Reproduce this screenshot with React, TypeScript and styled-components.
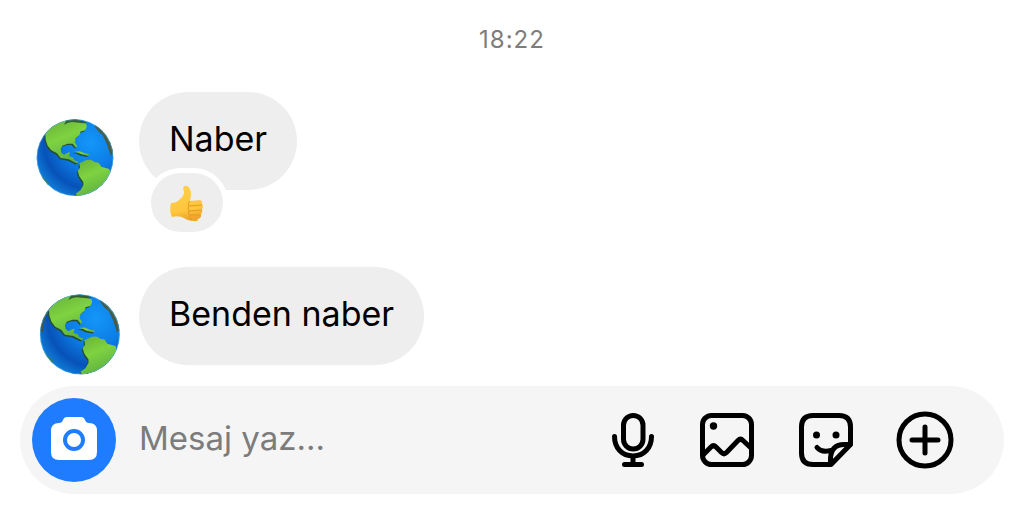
import React from "react";
import styled, { createGlobalStyle } from "styled-components";

const GlobalStyle = createGlobalStyle`
  *, *::before, *::after { box-sizing: border-box; }
  body {
    margin: 0;
    background: #fff;
    color: #000;
    font-family: Inter, "Liberation Sans", sans-serif;
  }
`;

const Chat = styled.main`
  padding: 20px;
`;

const Timestamp = styled.time`
  display: block;
  text-align: center;
  color: #7d7d7d;
  font-size: 24px;
  line-height: 40px;
  letter-spacing: 1px;
`;

const Thread = styled.ul`
  list-style: none;
  margin: 32px 0 9px;
  padding: 0 16px;
  display: flex;
  flex-direction: column;
  gap: 35px;
`;

const Message = styled.li`
  display: flex;
  align-items: flex-start;
  gap: 19px;
`;

const Avatar = styled.svg`
  flex: none;
  width: 84px;
  height: 84px;
  margin-top: 26px;
`;

const BubbleWrap = styled.div<{ $reacted: boolean }>`
  position: relative;
  padding-bottom: ${(p) => (p.$reacted ? "42px" : "0")};
`;

const Bubble = styled.p`
  margin: 0;
  padding: 23px 30px 27px;
  border-radius: 49px;
  background: #eee;
  font-size: 34px;
  line-height: 48px;
`;

const Reaction = styled.button`
  position: absolute;
  left: 7px;
  bottom: -5px;
  display: flex;
  align-items: center;
  justify-content: center;
  width: 82px;
  height: 69px;
  padding: 0;
  border: 5px solid #fff;
  border-radius: 35px;
  background: #eee;
`;

const Composer = styled.form`
  display: flex;
  align-items: center;
  padding: 12px 49px 12px 12px;
  border-radius: 54px;
  background: #f5f5f5;
`;

const CameraButton = styled.button`
  flex: none;
  display: flex;
  align-items: center;
  justify-content: center;
  width: 84px;
  height: 84px;
  padding: 0 0 2px;
  border: 0;
  border-radius: 50%;
  background: #1f7cff;
`;

const Field = styled.input`
  flex: 1;
  min-width: 0;
  height: 84px;
  padding: 0 23px 4px;
  border: 0;
  outline: 0;
  background: transparent;
  font: inherit;
  font-size: 33px;
  color: #000;
  &::placeholder { color: #7c7c7c; opacity: 1; }
`;

const Tools = styled.div`
  display: flex;
  gap: 38px;
`;

const ToolButton = styled.button`
  display: flex;
  padding: 0;
  border: 0;
  background: transparent;
  color: #000;
`;

const ToolIcon = styled.svg`
  display: block;
  width: 60px;
  height: 60px;
  fill: none;
  stroke: currentColor;
  stroke-width: 5;
  stroke-linecap: round;
  stroke-linejoin: round;
`;

const NORTH =
  "M88 86Q104 66 136 61Q150 57 164 61L194 70Q203 74 199 84L195 91L181 95L179 104L167 115L164 126L171 137L168 143L158 131L143 131L127 137L122 146L124 158L132 164L146 157L150 158L147 169L159 172L163 181L176 185L170 190L156 183L146 178L122 174L111 160L94 151L83 137L77 119L76 102Z";
const SOUTH =
  "M178 190L199 180L213 179L224 186L236 188L244 200L268 207L271 219L264 235L257 254L238 270L213 282L190 287L172 288L167 281L181 271L190 256L190 246L178 229L173 213L180 203Z";
const CUBA = "M162 155L178 153L194 160L209 163L204 167L184 163L174 158Z";
const EAST = "M225 78L239 84L252 98L259 98Q276 118 281 161L273 165L263 134L249 104L238 96Z";
const WEST = "M54 214Q70 234 90 252L80 255Q61 238 54 214Z";
const ARCTIC = "M132 74Q148 63 164 67L192 70L201 66L164 56L139 61Z";
const PACIFIC_RIM = "M92 84Q68 106 61 142L58 168L50 166L50 120L84 76Z";

interface GlobeProps {
  id: string;
  transform?: string;
  rim?: boolean;
}

function Globe({ id, transform, rim }: GlobeProps) {
  return (
    <Avatar viewBox="48 54 252 252" role="img" aria-label="Profil">
      <defs>
        <radialGradient id={`${id}-sea`} cx="0.7" cy="0.3" r="0.76">
          <stop offset="0" stopColor="#1497f8" />
          <stop offset="0.45" stopColor="#0c7de6" />
          <stop offset="0.8" stopColor="#0752b8" />
          <stop offset="1" stopColor="#0f78d4" />
        </radialGradient>
        <linearGradient id={`${id}-land`} x1="0" y1="0" x2="0.4" y2="1">
          <stop offset="0" stopColor="#66b038" />
          <stop offset="0.5" stopColor="#7fd240" />
          <stop offset="1" stopColor="#60b340" />
        </linearGradient>
        <clipPath id={`${id}-disc`}>
          <circle cx="165" cy="173" r="115" />
        </clipPath>
      </defs>
      <g transform={transform}>
        <circle cx="165" cy="173" r="115" fill={`url(#${id}-sea)`} />
        <g clipPath={`url(#${id}-disc)`}>
          <g fill="#234f36" transform="translate(-3 4)">
            <path d={NORTH} />
            <path d={SOUTH} />
            <path d={CUBA} />
          </g>
          <path d={EAST} fill="#465c45" stroke="#465c45" strokeWidth="3" />
          <path d={WEST} fill="#39784f" />
          {rim && <path d={PACIFIC_RIM} fill="#3d5445" />}
          <g fill={`url(#${id}-land)`}>
            <path d={NORTH} />
            <path d={SOUTH} />
            <path d={CUBA} />
          </g>
          <path d={ARCTIC} fill="#315c35" />
        </g>
        <circle cx="165" cy="173" r="114" fill="none" stroke="#5cc0f5" strokeOpacity="0.45" strokeWidth="3" />
      </g>
    </Avatar>
  );
}

function ThumbsUp() {
  return (
    <svg width="36" height="38" viewBox="0 0 36 38" aria-hidden="true">
      <defs>
        <linearGradient id="thumb" x1="0" y1="0" x2="0.2" y2="1">
          <stop offset="0" stopColor="#ffcf4b" />
          <stop offset="0.75" stopColor="#fec63d" />
          <stop offset="1" stopColor="#f0a62a" />
        </linearGradient>
      </defs>
      <path
        d="M2 19Q8 19 11 15Q15 12 15 8L14 4Q15 1 18 2Q22 4 22 11L21 17L31 16Q34 17 33 20Q35 23 33 25Q34 28 32 30Q33 34 29 35Q29 38 25 37Q19 37 15 34Q10 31 3 33Q0 27 2 19Z"
        fill="url(#thumb)"
      />
      <path
        d="M21 17Q18 19 20 22L33 21M20 22Q18 24 20 27L33 26M20 27Q18 29 21 31L31 31M21 31Q20 34 23 36"
        fill="none"
        stroke="#e39a27"
        strokeWidth="1"
      />
    </svg>
  );
}

export default function App() {
  return (
    <>
      <GlobalStyle />
      <Chat>
        <Timestamp dateTime="18:22">18:22</Timestamp>
        <Thread>
          <Message>
            <Globe id="first" />
            <BubbleWrap $reacted>
              <Bubble>Naber</Bubble>
              <Reaction type="button" aria-label="Beğeni">
                <ThumbsUp />
              </Reaction>
            </BubbleWrap>
          </Message>
          <Message>
            <Globe id="second" transform="translate(8 -2) scale(1.04)" rim />
            <BubbleWrap $reacted={false}>
              <Bubble>Benden naber</Bubble>
            </BubbleWrap>
          </Message>
        </Thread>
        <Composer>
          <CameraButton type="button" aria-label="Kamera">
            <svg width="48" height="48" viewBox="0 0 48 48" aria-hidden="true">
              <path
                d="M17 2H31Q34 2 35 5Q36 8 39 8Q47 8 47 16V37Q47 45 39 45H9Q1 45 1 37V16Q1 8 9 8Q12 8 13 5Q14 2 17 2Z"
                fill="#fff"
              />
              <circle cx="24" cy="25" r="9" fill="#fff" stroke="#1f7cff" strokeWidth="4" />
            </svg>
          </CameraButton>
          <Field type="text" aria-label="Mesaj" placeholder="Mesaj yaz..." />
          <Tools>
            <ToolButton type="button" aria-label="Ses kaydı">
              <ToolIcon viewBox="601 410 60 60">
                <rect x="623.5" y="415.5" width="19.5" height="33.5" rx="9.75" />
                <path d="M614.5 436.5C614.5 448 622 456 633 456S651.5 448 651.5 436.5M633 456V464M624.5 464.5H641.5" />
              </ToolIcon>
            </ToolButton>
            <ToolButton type="button" aria-label="Fotoğraf">
              <ToolIcon viewBox="699 410 60 60">
                <rect x="702.5" y="415.5" width="49" height="49" rx="9" />
                <circle cx="713.5" cy="426" r="3.7" fill="currentColor" stroke="none" />
                <path d="M703 455L711 447Q713.5 444.5 716 447L721.5 452.5Q724 455 726.5 452.5L738 440.5Q740.5 438 743 440.5L751 448" />
              </ToolIcon>
            </ToolButton>
            <ToolButton type="button" aria-label="Çıkartma">
              <ToolIcon viewBox="797 410 60 60">
                <path d="M831 464.5H813Q801.5 464.5 801.5 453V427Q801.5 415.5 813 415.5H839Q850.5 415.5 850.5 427V444.5L831 464.5Z" />
                <path d="M830.5 463V458Q831.5 444.5 844 444.5H850M817 447.5Q822 453.5 832 450" />
                <circle cx="816.5" cy="435" r="3.5" fill="currentColor" stroke="none" />
                <circle cx="836" cy="435" r="3.5" fill="currentColor" stroke="none" />
              </ToolIcon>
            </ToolButton>
            <ToolButton type="button" aria-label="Daha fazla">
              <ToolIcon viewBox="895 410 60 60">
                <circle cx="925" cy="440" r="26" />
                <path d="M925 427V453M912 440H938" />
              </ToolIcon>
            </ToolButton>
          </Tools>
        </Composer>
      </Chat>
    </>
  );
}
